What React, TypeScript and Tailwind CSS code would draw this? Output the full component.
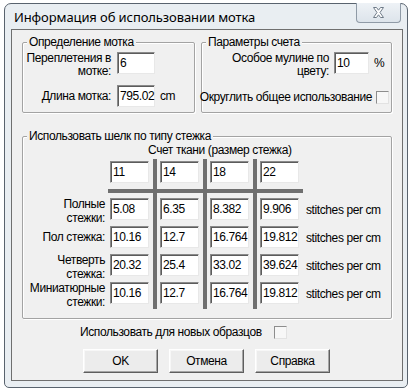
import React from 'react';

// Поле ввода в стиле классического диалога Windows
const Edit: React.FC<{ value: string; className?: string }> = ({ value, className = 'w-[39px]' }) => (
    <div
        className={`h-[22px] shrink-0 bg-white border border-t-[#8a8a8a] border-l-[#8a8a8a] border-b-[#e8e8e8] border-r-[#e8e8e8] shadow-[inset_1px_1px_0_#5c5c5c] pl-[2px] pt-[1px] leading-[18px] text-black whitespace-nowrap ${className}`}
    >
        {value}
    </div>
);

const Check: React.FC = () => (
    <div className="w-[13px] h-[13px] shrink-0 bg-[#f7f7f7] border border-t-[#8d8d8d] border-l-[#8d8d8d] border-b-[#e2e2e2] border-r-[#e2e2e2]" />
);

const Button: React.FC<{ label: string }> = ({ label }) => (
    <div className="w-[75px] h-[24px] shrink-0 flex items-center justify-center bg-[#ececec] border border-t-[#ffffff] border-l-[#ffffff] border-b-[#5e5e5e] border-r-[#5e5e5e] shadow-[inset_-1px_-1px_0_#a5a5a5,inset_1px_1px_0_#f7f7f7] text-black">
        {label}
    </div>
);

const GroupBox: React.FC<{ title: string; className: string; children: React.ReactNode }> = ({ title, className, children }) => (
    <div className={`relative shrink-0 border border-[#a3a3a3] rounded-[2px] shadow-[1px_1px_0_#ffffff,inset_1px_1px_0_#ffffff] ${className}`}>
        <span className="absolute -top-[8px] left-[4px] px-[2px] bg-[#f0f0f0] leading-[14px] whitespace-nowrap text-black">{title}</span>
        {children}
    </div>
);

const counts = ['11', '14', '18', '22'];
const rows = [
    { label: ['Полные', 'стежки:'], values: ['5.08', '6.35', '8.382', '9.906'] },
    { label: ['Пол стежка:'], values: ['10.16', '12.7', '16.764', '19.812'] },
    { label: ['Четверть', 'стежка:'], values: ['20.32', '25.4', '33.02', '39.624'] },
    { label: ['Миниатюрные', 'стежки:'], values: ['10.16', '12.7', '16.764', '19.812'] },
];

const Column: React.FC<{ idx: number; first?: boolean }> = ({ idx, first }) => (
    <div className={`flex flex-col shrink-0 ${first ? 'w-[45px]' : 'w-[46px]'}`}>
        <div className={`mt-[2px] ${first ? 'ml-[2px]' : 'ml-[3px]'}`}>
            <Edit value={counts[idx]} />
        </div>
        <div className="mt-[6px] h-[4px] w-full bg-[#6f6f6f]" />
        <div className={`mt-[5px] flex flex-col gap-[6px] ${first ? 'ml-[2px]' : 'ml-[3px]'}`}>
            {rows.map((r, i) => (
                <Edit key={i} value={r.values[idx]} />
            ))}
        </div>
    </div>
);

const VLine = () => <div className="w-[4px] h-[150px] shrink-0 bg-[#6f6f6f]" />;

export default function App() {
    return (
        <div className="w-[412px] h-[391px] bg-white overflow-hidden pt-[3px] pl-[4px] font-['Liberation_Sans',sans-serif] text-[12px] tracking-[-0.4px] text-black">
            <div className="w-[404px] h-[385px] flex flex-col border border-[#59636e] rounded-t-[7px] rounded-b-[5px] bg-[#e9eef2]">
                {/* заголовок окна */}
                <div className="h-[25px] flex items-start justify-between shrink-0">
                    <span className="pl-[9px] pt-[4px] leading-[18px] text-[13px] tracking-[-0.1px] font-['Noto_Sans',sans-serif] text-black whitespace-nowrap">
                        Информация об использовании мотка
                    </span>
                    <div className="-mt-[1px] mr-[6px] w-[45px] h-[20px] flex items-center justify-center rounded-b-[4px] border border-t-0 border-[#8f9aa6] bg-gradient-to-b from-[#eef2f6] to-[#dde4eb]">
                        <svg width="13" height="11" viewBox="0 0 13 11">
                            <path
                                d="M1.5 0.5 H4.5 L6.5 3.2 L8.5 0.5 H11.5 L8 5.5 L11.5 10.5 H8.5 L6.5 7.8 L4.5 10.5 H1.5 L5 5.5 Z"
                                fill="#ffffff"
                                stroke="#6f7b88"
                                strokeWidth="1"
                                strokeLinejoin="round"
                            />
                        </svg>
                    </div>
                </div>

                {/* клиентская область */}
                <div className="ml-[6px] w-[392px] h-[352px] shrink-0 border border-[#6f6f6f] bg-[#f0f0f0]">
                    <div className="flex mt-[12px] ml-[10px] gap-[6px]">
                        <GroupBox title="Определение мотка" className="w-[173px] h-[71px]">
                            <div className="flex mt-[9px]">
                                <div className="w-[88px] text-right leading-[13px] whitespace-nowrap">
                                    Переплетения в<br />мотке:
                                </div>
                                <div className="ml-[6px]">
                                    <Edit value="6" className="w-[38px]" />
                                </div>
                            </div>
                            <div className="flex items-center mt-[7px]">
                                <div className="w-[88px] text-right leading-[13px] whitespace-nowrap">Длина мотка:</div>
                                <div className="ml-[6px]">
                                    <Edit value="795.02" className="w-[38px]" />
                                </div>
                                <span className="ml-[5px] leading-[13px]">cm</span>
                            </div>
                        </GroupBox>

                        <GroupBox title="Параметры счета" className="w-[191px] h-[71px]">
                            <div className="flex mt-[9px]">
                                <div className="w-[127px] text-right leading-[13px] whitespace-nowrap">
                                    Особое мулине по<br />цвету:
                                </div>
                                <div className="ml-[5px]">
                                    <Edit value="10" className="w-[35px]" />
                                </div>
                                <span className="ml-[5px] mt-[5px] leading-[13px]">%</span>
                            </div>
                            <div className="flex items-center justify-end gap-[4px] pr-[2px] mt-[13px]">
                                <span className="leading-[13px] whitespace-nowrap">Округлить общее использование</span>
                                <Check />
                            </div>
                        </GroupBox>
                    </div>

                    <GroupBox title="Использовать шелк по типу стежка" className="ml-[10px] mt-[23px] w-[370px] h-[183px]">
                        <div className="mt-[7px] pl-[125px] leading-[13px] whitespace-nowrap">Счет ткани (размер стежка)</div>
                        <div className="flex mt-[2px]">
                            <div className="w-[85px] shrink-0 flex flex-col pt-[39px] gap-[6px]">
                                {rows.map((r, i) => (
                                    <div
                                        key={i}
                                        className={`h-[22px] flex flex-col justify-center items-end pr-[3px] leading-[14px] ${r.label.length > 1 ? 'pt-[4px]' : ''}`}
                                    >
                                        {r.label.map((l, j) => (
                                            <span key={j} className="whitespace-nowrap">{l}</span>
                                        ))}
                                    </div>
                                ))}
                            </div>
                            <Column idx={0} first />
                            <VLine />
                            <Column idx={1} />
                            <VLine />
                            <Column idx={2} />
                            <VLine />
                            <Column idx={3} />
                            <div className="flex flex-col pt-[39px] gap-[6px] pl-[3px]">
                                {rows.map((_, i) => (
                                    <div key={i} className="h-[22px] flex items-center pt-[2px] whitespace-nowrap">
                                        stitches per cm
                                    </div>
                                ))}
                            </div>
                        </div>
                    </GroupBox>

                    <div className="flex items-center mt-[7px] pl-[68px] gap-[12px]">
                        <span className="leading-[13px] whitespace-nowrap">Использовать для новых образцов</span>
                        <Check />
                    </div>

                    <div className="flex mt-[10px] pl-[71px] gap-[11px]">
                        <Button label="OK" />
                        <Button label="Отмена" />
                        <Button label="Справка" />
                    </div>
                </div>
            </div>
        </div>
    );
}
